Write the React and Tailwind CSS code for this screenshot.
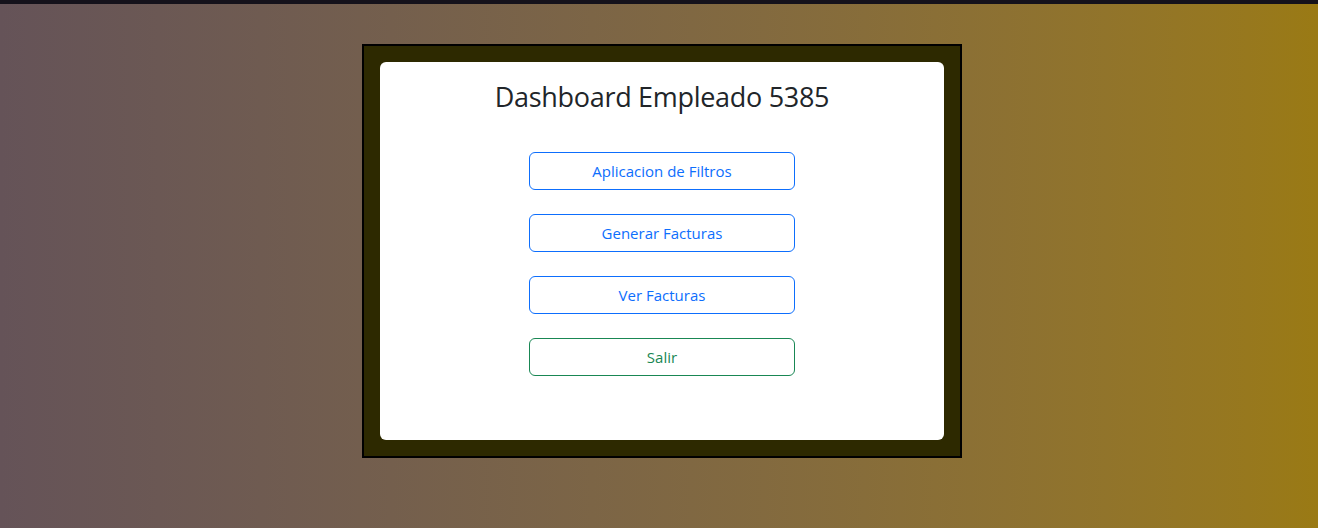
import React from 'react';

const botones = [
    { label: 'Aplicacion de Filtros', tone: 'blue' },
    { label: 'Generar Facturas', tone: 'blue' },
    { label: 'Ver Facturas', tone: 'blue' },
    { label: 'Salir', tone: 'green' },
];

export default function App() {
    return (
        <div className="h-[528px] flex flex-col bg-gradient-to-r from-[#655358] to-[#9a7a14] font-['Open_Sans','Noto_Sans',sans-serif]">
            <div className="h-1 bg-[#15121b]" />

            <div className="flex justify-center mt-10 pl-[6px]">
                <div className="w-[600px] h-[414px] border-2 border-black bg-[#2d2900] p-4">
                    <div className="h-full bg-white rounded-md flex flex-col items-center pt-[18px]">
                        <h3 className="text-[27px] leading-[34px] text-[#212529] font-normal tracking-[-0.3px]">
                            Dashboard Empleado 5385
                        </h3>

                        <div className="mt-[38px] flex flex-col gap-6">
                            {botones.map((b) => (
                                <button
                                    key={b.label}
                                    className={
                                        b.tone === 'green'
                                            ? 'w-[266px] h-[38px] rounded-md border border-[#198754] text-[#198754] text-[15px] bg-white'
                                            : 'w-[266px] h-[38px] rounded-md border border-[#0d6efd] text-[#0d6efd] text-[15px] bg-white'
                                    }
                                >
                                    {b.label}
                                </button>
                            ))}
                        </div>
                    </div>
                </div>
            </div>
        </div>
    );
}
